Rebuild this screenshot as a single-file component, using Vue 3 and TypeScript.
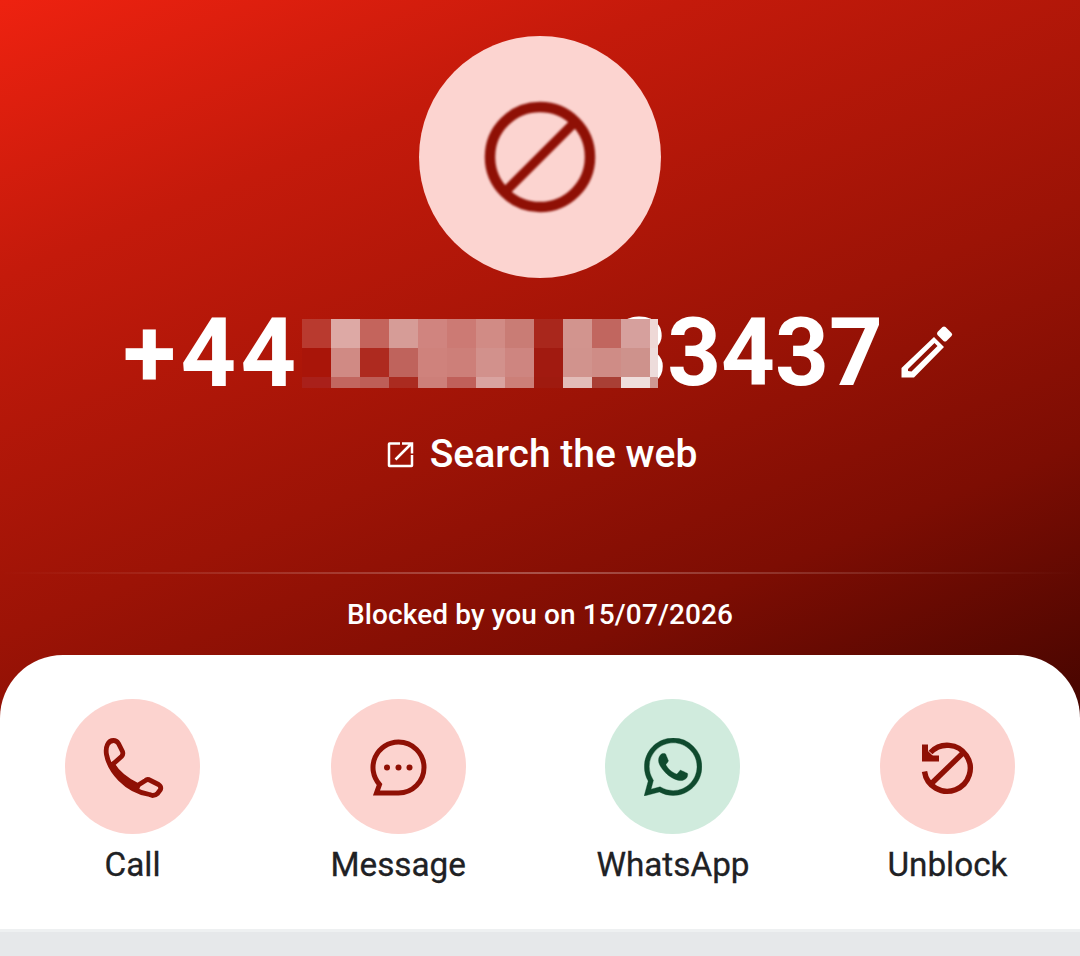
<script setup lang="ts">
const mosaic: string[] = [
  '#b93a2f', '#dda9a5', '#c4645c', '#d69c97', '#d0847f', '#cc7a74', '#d18b85', '#c97c75', '#a9271c', '#d2948e', '#c1665f', '#d6a09d', '#eed8d6',
  '#a91509', '#d08a84', '#ae2a1f', '#bf635c', '#cf827c', '#cd7f79', '#d2918c', '#ce8580', '#a11a10', '#d1938d', '#cf8c86', '#ce928c', '#eddcdb',
  '#a9201a', '#c2665f', '#be5e57', '#ab2b20', '#cd7f79', '#c0605a', '#d9a3a0', '#cc7f78', '#9f1a0f', '#e2bcb8', '#a93f35', '#efdedc', '#cf9893',
]
</script>

<template>
  <div class="page">
    <header class="hero">
      <div class="avatar">
        <svg class="avatar-icon" width="112" height="112" viewBox="0 0 112 112" fill="none" stroke="currentColor" stroke-width="10.500">
          <circle cx="56" cy="56" r="50" />
          <path d="M21 91 91 21" stroke-width="9.500" />
        </svg>
      </div>

      <div class="number">
        <span class="lead">+44</span>
        <div class="mosaic" aria-hidden="true">
          <i v-for="(c, i) in mosaic" :key="i" :style="{ background: c }"></i>
        </div>
        <span class="tail">33437</span>
        <svg class="pencil" width="54" height="54" viewBox="0 0 54 54" fill="#fff" fill-rule="evenodd">
          <path d="M33 11 43 21 13 51.500H.5V42ZM33.500 17 36.500 20 10.500 45.500 7 45V43Z" />
          <path d="M36.500 6 41.500 1Q43 0 44.500 1L50.500 7Q52 8.500 50.500 10L45.500 15Q44 16 42.500 15L36.500 9Q35.500 7.500 36.500 6Z" />
        </svg>
      </div>

      <div class="search">
        <svg width="27" height="27" viewBox="0 0 27 27" fill="none" stroke="#fff" stroke-width="2.500">
          <path d="M13 2.500H2.500Q2 2.500 2 3V24.500Q2 25 2.500 25H24.500Q25 25 25 24.500V14" />
          <path d="M8.500 18.500 24.500 2.500M15 2.500H25V12.500" />
        </svg>
        <span>Search the web</span>
      </div>

      <div class="divider"></div>
      <p class="blocked">Blocked by you on 15/07/2026</p>
    </header>

    <section class="sheet">
      <div class="action">
        <div class="round">
          <svg width="100" height="100" viewBox="-2.500 -3.500 100 100" fill="none" stroke="#8f1005" stroke-width="4.800" stroke-linejoin="round">
            <path d="M28 20Q24 20 22 24 20 28 21 34C24 50 40 70 64 74L67 75Q70 75 72 73L75 69Q76 66 73 64L65 60Q62 58 60 60L52 65C42 60 33 54 27 44L36 36Q38 34 37 31L33 23Q31 20 28 20Z" />
            <path d="M25 42C31 55 42 64 54 68" stroke-width="6.500" />
          </svg>
        </div>
        <span>Call</span>
      </div>

      <div class="action">
        <div class="round">
          <svg width="100" height="100" viewBox="-1.500 -3.500 100 100" fill="none" stroke="#8f1005" stroke-width="5">
            <path d="M49 21.500A25.500 25.500 0 0 1 49 72.500H27L30 64A25.500 25.500 0 0 1 49 21.500Z" />
            <g fill="#8f1005" stroke="none">
              <circle cx="37.500" cy="47" r="3" />
              <circle cx="49" cy="47" r="3" />
              <circle cx="60" cy="47" r="3" />
            </g>
          </svg>
        </div>
        <span>Message</span>
      </div>

      <div class="action">
        <div class="round green">
          <svg width="58" height="58" viewBox="0 0 24 24" fill="#0f4a2e" stroke="#0f4a2e" stroke-width="0.150">
            <path d="M17.472 14.382c-.297-.149-1.758-.867-2.03-.967-.273-.099-.471-.148-.67.15-.197.297-.767.966-.94 1.164-.173.199-.347.223-.644.075-.297-.15-1.255-.463-2.39-1.475-.883-.788-1.48-1.761-1.653-2.059-.173-.297-.018-.458.13-.606.134-.133.298-.347.446-.52.149-.174.198-.298.298-.497.099-.198.05-.371-.025-.52-.075-.149-.669-1.612-.916-2.207-.242-.579-.487-.5-.669-.51-.173-.008-.371-.01-.57-.01-.198 0-.52.074-.792.372-.272.297-1.04 1.016-1.04 2.479 0 1.462 1.065 2.875 1.213 3.074.149.198 2.096 3.2 5.077 4.487.709.306 1.262.489 1.694.625.712.227 1.36.195 1.871.118.571-.085 1.758-.719 2.006-1.413.248-.694.248-1.289.173-1.413-.074-.124-.272-.198-.57-.347m-5.421 7.403h-.004a9.87 9.87 0 01-5.031-1.378l-.361-.214-3.741.982.998-3.648-.235-.374a9.86 9.86 0 01-1.51-5.26c.001-5.45 4.436-9.884 9.888-9.884 2.64 0 5.122 1.03 6.988 2.898a9.825 9.825 0 012.893 6.994c-.003 5.45-4.437 9.884-9.885 9.884m8.413-18.297A11.815 11.815 0 0012.05 0C5.495 0 .16 5.335.157 11.892c0 2.096.547 4.142 1.588 5.945L.057 24l6.305-1.654a11.882 11.882 0 005.683 1.448h.005c6.554 0 11.89-5.335 11.893-11.893a11.821 11.821 0 00-3.48-8.413Z" />
          </svg>
        </div>
        <span>WhatsApp</span>
      </div>

      <div class="action">
        <div class="round">
          <svg width="100" height="100" viewBox="-2.500 -3.500 100 100" fill="none" stroke="#8f1005" stroke-width="5.400">
            <path d="M31 32A23 23 0 1 1 25 51" />
            <path d="M65 31 32 63" />
            <path d="M25.500 24V38H39.500" stroke-width="6" />
            <path d="M23 25 36 38H23Z" fill="#8f1005" stroke="none" />
          </svg>
        </div>
        <span>Unblock</span>
      </div>
    </section>

    <div class="footer-bar"></div>
  </div>
</template>

<style scoped>
.page {
  width: 1080px;
  height: 956px;
  display: flex;
  flex-direction: column;
  overflow: hidden;
  font-family: Roboto, "Liberation Sans", sans-serif;
  background: #e6e8ea;
}

.hero {
  height: 720px;
  flex: none;
  box-sizing: border-box;
  padding-top: 36px;
  display: flex;
  flex-direction: column;
  align-items: center;
  color: #fff;
  background: linear-gradient(158deg, #ee2210 0%, #c41a0b 24%, #9c1306 55%, #7d0d03 76%, #440500 100%);
}

.avatar {
  width: 242px;
  height: 242px;
  border-radius: 50%;
  background: #fcd4d0;
  color: #8f1005;
  display: flex;
  align-items: center;
  justify-content: center;
}

.avatar-icon {
  filter: blur(0.8px);
}

.number {
  margin: 30px 0 0 -2px;
  display: flex;
  align-items: center;
  height: 90px;
  font-size: 94px;
  font-weight: 700;
  line-height: 92px;
}

.lead {
  font-size: 97px;
  letter-spacing: 4.500px;
}

.mosaic {
  position: relative;
  z-index: 1;
  margin-left: 1.500px;
  display: grid;
  grid-template-columns: repeat(12, 29px) 8px;
  grid-template-rows: 29px 29px 11px;
}

.tail {
  margin-left: -45px;
}

.pencil {
  margin-left: 18px;
}

.search {
  margin-top: 33px;
  margin-left: 4px;
  display: flex;
  align-items: center;
  gap: 16px;
  font-size: 39px;
  font-weight: 500;
  line-height: 46px;
}

.divider {
  margin-top: 95px;
  width: 100%;
  height: 2px;
  flex: none;
  background: linear-gradient(90deg, rgba(255, 255, 255, 0), rgba(255, 255, 255, 0.28) 50%, rgba(255, 255, 255, 0));
}

.blocked {
  margin: 23px 0 0;
  font-size: 28px;
  font-weight: 500;
  line-height: 36px;
  letter-spacing: 0.100px;
}

.sheet {
  position: relative;
  margin-top: -65px;
  height: 274px;
  flex: none;
  box-sizing: border-box;
  padding: 44px 65px 0;
  display: flex;
  justify-content: space-between;
  background: #fff;
  border-radius: 63px 63px 0 0;
}

.action {
  display: flex;
  flex-direction: column;
  align-items: center;
  gap: 10px;
  font-size: 33.300px;
  font-weight: 450;
  line-height: 42px;
  color: #202124;
  -webkit-text-stroke: 0.300px #202124;
}

.round {
  width: 135px;
  height: 135px;
  border-radius: 50%;
  background: #fcd3cf;
  display: flex;
  align-items: center;
  justify-content: center;
}

.round.green {
  background: #d0ebdd;
}

.footer-bar {
  flex: 1;
  border-top: 3px solid #eef0f1;
  background: #e6e8ea;
}
</style>

<style>
body {
  margin: 0;
}
</style>
